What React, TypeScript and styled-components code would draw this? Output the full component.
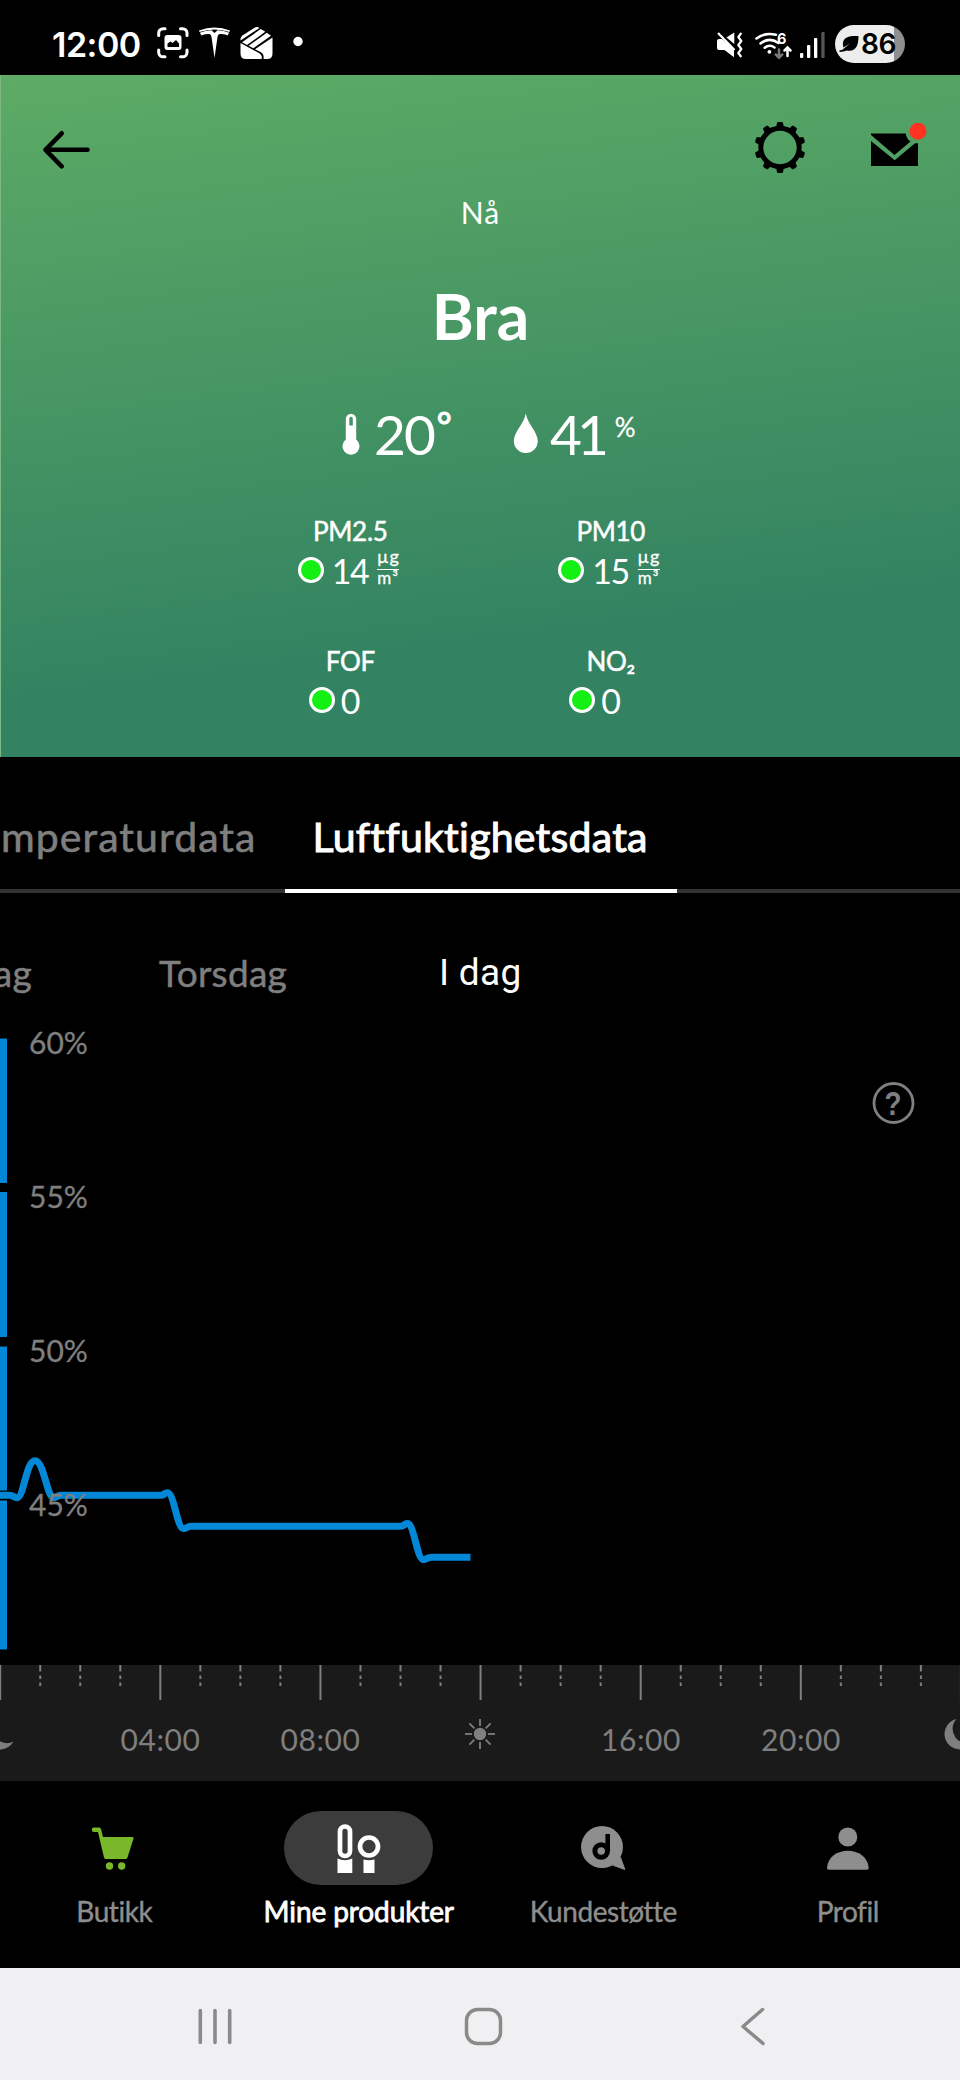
import React from "react";
import styled, { createGlobalStyle } from "styled-components";

const lato = `Lato, "Open Sans", sans-serif`;
const GREY = "#7f7f7f";
const BLUE = "#0288d6";

const GlobalStyle = createGlobalStyle`
  body { margin: 0; background: #000; }
  * { box-sizing: border-box; }
  svg { display: block; flex: none; }
`;

const Screen = styled.div`
  width: 960px;
  height: 2080px;
  display: flex;
  flex-direction: column;
  overflow: hidden;
  background: #000;
  font-family: ${lato};
  font-variant-ligatures: none;
  color: #fff;
`;

/* ---------- status bar ---------- */

const StatusBar = styled.div`
  height: 75px;
  flex: none;
  display: flex;
  align-items: flex-start;
  padding: 25px 55px 0 52px;
`;

const Clock = styled.span`
  width: 103px;
  font: 600 34px/40px Inter, sans-serif;
  letter-spacing: -0.5px;
`;

const StatusRight = styled.div`
  margin-left: auto;
  display: flex;
  gap: 5px;
`;

const Battery = styled.div`
  width: 70px;
  height: 38px;
  display: flex;
  align-items: center;
  justify-content: flex-end;
  gap: 2px;
  padding-right: 9px;
  border-radius: 19px;
  background: linear-gradient(90deg, #ededed 59px, #8f8f8f 59px);
  color: #000;
  font: 600 28px/38px Inter, sans-serif;
  letter-spacing: -0.4px;
`;

/* ---------- hero ---------- */

const Hero = styled.header`
  height: 682px;
  flex: none;
  display: flex;
  flex-direction: column;
  border-left: 1px solid #7bb883;
  background: linear-gradient(173deg, #5dab65 0%, #338362 78%);
`;

const TopBar = styled.div`
  height: 119px;
  flex: none;
  display: flex;
  align-items: flex-start;
  padding: 45px 29px 0 40px;
`;

const TopActions = styled.div`
  display: flex;
  gap: 61px;
  margin-left: auto;
`;

const NowLabel = styled.div`
  text-align: center;
  font-size: 30px;
  line-height: 36px;
  letter-spacing: 1px;
`;

const Quality = styled.h1`
  margin: 46px 0 0;
  text-align: center;
  font-size: 64px;
  font-weight: 700;
  line-height: 80px;
`;

const Climate = styled.div`
  height: 66px;
  margin-top: 45px;
  padding-left: 339px;
  display: flex;
  font-size: 55px;
  line-height: 66px;

  svg {
    margin-top: 10px;
  }
`;

const Reading = styled.div<{ $width: number }>`
  width: ${(p) => p.$width}px;
  display: flex;
`;

const Figure = styled.span<{ $tight: number; $left: number }>`
  margin-left: ${(p) => p.$left}px;
  letter-spacing: ${(p) => -p.$tight}px;
`;

const Superscript = styled.sup<{ $size: number; $left: number; $line: number; $stroke: number }>`
  margin-left: ${(p) => p.$left}px;
  font-size: ${(p) => p.$size}px;
  line-height: ${(p) => p.$line}px;
  -webkit-text-stroke: ${(p) => p.$stroke}px #fff;
`;

const MetricGrid = styled.div`
  width: 521px;
  margin: 48px auto 0;
  display: grid;
  grid-template-columns: 1fr 1fr;
  grid-auto-rows: 130px;
`;

const Metric = styled.div`
  display: flex;
  flex-direction: column;
  align-items: center;
  gap: 3px;
`;

const MetricName = styled.div`
  font-size: 26px;
  line-height: 32px;
  letter-spacing: -0.3px;
  -webkit-text-stroke: 0.5px #fff;
`;

const MetricValue = styled.div<{ $width: number }>`
  width: ${(p) => p.$width}px;
  height: 42px;
  display: flex;
  align-items: flex-start;
`;

const Lamp = styled.span`
  width: 26px;
  height: 26px;
  margin-top: 7px;
  border: 3.5px solid #fff;
  border-radius: 50%;
  background: #14f014;
`;

const Amount = styled.span<{ $wide?: boolean }>`
  margin-left: ${(p) => (p.$wide ? 8 : 6)}px;
  font-size: 34px;
  line-height: 42px;
  letter-spacing: ${(p) => (p.$wide ? -1.5 : 0)}px;
`;

const Unit = styled.span`
  display: flex;
  flex-direction: column;
  width: 22px;
  margin-left: 9px;
  -webkit-text-stroke: 0.3px #fff;

  span:first-child {
    height: 20px;
    font-size: 18px;
    line-height: 13px;
    letter-spacing: 1.6px;
    border-bottom: 1px solid #fff;
  }
  span:last-child {
    font-size: 17px;
    line-height: 16px;
    letter-spacing: 1px;
  }
`;

/* ---------- tabs and days ---------- */

const Tabs = styled.nav`
  height: 136px;
  flex: none;
  display: flex;
  overflow: hidden;
`;

const Tab = styled.div<{ $active?: boolean; $width?: number }>`
  ${(p) => (p.$width ? `width: ${p.$width}px; flex: none;` : "flex: 1;")}
  display: flex;
  justify-content: ${(p) => (p.$active ? "flex-start" : "flex-end")};
  padding: 55px 28px 0 28px;
  border-bottom: 4px solid ${(p) => (p.$active ? "#fff" : "#333")};
  color: ${(p) => (p.$active ? "#fff" : GREY)};
  -webkit-text-stroke: ${(p) => (p.$active ? "1px #fff" : "0.6px #7f7f7f")};
  font-size: 41px;
  line-height: 50px;
  letter-spacing: ${(p) => (p.$active ? 0.25 : 1.05)}px;
  white-space: nowrap;
`;

const Days = styled.div`
  height: 102px;
  flex: none;
  display: grid;
  grid-template-columns: 32px 280px auto;
  padding-top: 58px;
  overflow: hidden;
`;

const Day = styled.div<{ $active?: boolean; $cut?: boolean }>`
  display: flex;
  justify-content: ${(p) => (p.$cut ? "flex-end" : "flex-start")};
  padding-left: ${(p) => (p.$cut ? 0 : 127)}px;
  color: ${(p) => (p.$active ? "#fff" : GREY)};
  font-family: ${(p) => (p.$active ? "Roboto, sans-serif" : lato)};
  -webkit-text-stroke: ${(p) => (p.$active ? "0" : "0.5px #7f7f7f")};
  font-size: 37px;
  line-height: 44px;
  letter-spacing: 0.3px;
  white-space: nowrap;
`;

/* ---------- bottom navigation ---------- */

const BottomNav = styled.nav`
  height: 187px;
  flex: none;
  display: grid;
  grid-template-columns: repeat(4, 244.5px);
  margin-left: -8px;
  padding-top: 30px;
`;

const NavItem = styled.div<{ $active?: boolean }>`
  display: flex;
  flex-direction: column;
  align-items: center;
  gap: 9px;
  color: ${(p) => (p.$active ? "#fff" : "#8e8e8e")};
  -webkit-text-stroke: ${(p) => (p.$active ? "0.8px" : "0.4px")} currentColor;
  font-size: 28px;
  line-height: 34px;
  letter-spacing: ${(p) => (p.$active ? -0.1 : -0.45)}px;
`;

const NavPill = styled.div<{ $active?: boolean }>`
  width: 149px;
  height: 74px;
  display: flex;
  align-items: center;
  justify-content: center;
  border-radius: 37px;
  background: ${(p) => (p.$active ? "#3c3c3c" : "transparent")};
`;

const SystemNav = styled.div`
  height: 112px;
  flex: none;
  display: flex;
  gap: 229px;
  padding: 39px 0 0 195px;
  background: #f0f0f2;
`;

/* ---------- drawings ---------- */

const NotificationIcons = () => (
  <svg width="150" height="36" viewBox="155 28 150 36" fill="#fff">
    <g fill="none" stroke="#fff" strokeWidth="3" strokeLinecap="round">
      <path d="M158.7 38.5V36a4.5 4.5 0 0 1 4.5-4.3H165M180.5 31.7H182.5a4.5 4.5 0 0 1 4.5 4.3V38.5M187 53V55.5a4.5 4.5 0 0 1-4.5 4.3H180.5M165 59.8H163.2a4.5 4.5 0 0 1-4.5-4.3V53" />
    </g>
    <rect x="164.5" y="38" width="17" height="15" rx="3" />
    <path d="M167.500 50v-3.500l3-2 2 1.500 3.500-3 3 3.500V50z" fill="#000" />
    <path d="M199 33.500Q214.500 27.500 230 33.500L229.500 35Q214.500 30 199.500 35z" />
    <path d="M199.800 35.700Q206 33 211.500 33.200L214.500 36L217.500 33.200Q223 33 229.200 35.700L227.500 38.500Q225 36.500 219.500 37Q217.800 37.500 217.500 40L214.500 61L211.500 40Q211.200 37.500 209.500 37Q204 36.500 201.500 38.500z" />
    <path d="M240.500 46L258 55.500Q263 58 261.500 62H246Q240.500 62 240.500 56.500z" />
    <path d="M240.500 43.500V42Q240.500 40 242.500 38.500L254.500 30.800Q257 29.300 259.500 31z" />
    <path d="M242 45.300L260.800 32L265.300 34.800L247 47.900z" />
    <path d="M248.600 48.800L266.800 35.800L271 38.800L253.400 51.300z" />
    <path d="M255 52.200L272.500 40.500V56.500Q272.500 62 267 62H263.500Q264.500 57 260.500 55z" />
    <circle cx="298" cy="44.500" r="4.700" />
  </svg>
);

const SignalIcons = () => (
  <svg width="115" height="40" viewBox="714 25 115 40" fill="#fff">
    <path d="M716 41q0-2 2-2h3l12 10v8.200l-9.500-7.200H718q-2 0-2-2zM733.300 32.500V44L725.500 37.500z" />
    <path d="M717 33L733.500 50" stroke="#fff" strokeWidth="2.300" />
    <path d="M740.300 33l-3 4 3 4-3 4 3 4-3 4 3 4" fill="none" stroke="#fff" strokeWidth="2.200" strokeLinejoin="round" />
    <g fill="none" stroke="#fff" strokeWidth="2.500" strokeLinecap="round">
      <path d="M755.500 38.500Q764 32 775 34.800M759.500 43.500Q768 36.500 777.500 43M763.700 47.700Q768.500 44 773.500 47.500" />
      <path d="M786.500 56V48M783.500 50.500L786.500 47.500L789.500 50.500" />
      <path d="M778 49.500V57.500M774.800 54.500L778 57.700L781.200 54.500" stroke="#777" />
    </g>
    <circle cx="768.400" cy="51.800" r="1.900" />
    <text x="776" y="44" fontSize="14.500" fontWeight="700" fontFamily="Inter, sans-serif">6</text>
    <rect x="799" y="53" width="3.300" height="5" rx="1" />
    <rect x="806" y="45" width="3.300" height="13" rx="1" />
    <rect x="813" y="38" width="3.300" height="20" rx="1" />
    <rect x="820.300" y="32" width="3.300" height="26" rx="1" fill="#555" />
  </svg>
);

const LeafIcon = () => (
  <svg width="20" height="18" viewBox="838 35 20 18">
    <path d="M857.500 36c-8-.5-14.500.5-15.500 6.500q-.5 3 .5 5L849 43.500L841 50l-2.500.2v1.800l4-.4q2-.6 3.500-1.200c8 1.500 11.500-3.400 11.500-14.400z" />
  </svg>
);

const BackArrow = () => (
  <svg width="52" height="60" viewBox="41 120 52 60" fill="none" stroke="#000" strokeWidth="4.600" strokeLinecap="round" strokeLinejoin="round">
    <path d="M87.500 149.800H45.500M61.700 133.300L45.500 149.800L61.700 166.300" />
  </svg>
);

const GearIcon = () => (
  <svg width="52" height="56" viewBox="754 120 52 56">
    <circle cx="780" cy="147.500" r="19.200" fill="none" stroke="#000" strokeWidth="5" />
    {Array.from({ length: 10 }, (_, i) => (
      <path key={i} d="M775.800 128.500L777.200 122.300Q780 121.500 782.800 122.300L784.200 128.500z" transform={`rotate(${i * 36} 780 147.500)`} />
    ))}
  </svg>
);

const MailIcon = () => (
  <svg width="64" height="56" viewBox="867 120 64 56">
    <path d="M871 133.500H905.500Q907 139.500 910.500 141.500L894.500 155L871 135z" />
    <path d="M871 141L894.700 160.300L915 143.200H918V166H871z" />
    <circle cx="918" cy="131.200" r="8.500" fill="#ff3320" />
  </svg>
);

const Thermometer = () => (
  <svg width="21" height="46" viewBox="339 411 21 46">
    <path fill="#fff" fillRule="evenodd" d="M344.800 419a5.200 5.200 0 0 1 10.400 0V439.500a8.500 8.500 0 1 1-10.400 0zM348.300 418.500V425.500h3.500V418.500a1.750 1.750 0 0 0-3.500 0z" />
  </svg>
);

const Droplet = () => (
  <svg width="26" height="46" viewBox="513 411 26 46">
    <path fill="#fff" d="M525.800 413.500C527.500 424 537.800 432 537.800 441a12 12 0 0 1-24 0C513.800 432 524 424 525.800 413.500z" />
  </svg>
);

const CartIcon = () => (
  <svg width="46" height="46" viewBox="90 1825 46 46" fill="#78b82a">
    <path d="M93 1827.500H98q1.500 0 2 1.500L102 1837H131.500q1.500 0 1 1.500L126.500 1857.500q-.5 1.500-2 1.500H105q-1.500 0-2-1.500L97 1832H93a2.200 2.200 0 0 1 0-4.500z" />
    <circle cx="108.500" cy="1866" r="3.700" />
    <circle cx="120.700" cy="1866" r="3.700" />
  </svg>
);

const ProductsIcon = () => (
  <svg width="46" height="52" viewBox="336.500 1822 46 52" fill="#fff">
    <rect x="340.500" y="1826.500" width="10" height="29.500" rx="5" fill="none" stroke="#fff" strokeWidth="4.700" />
    <path d="M338 1858.500q7.500 3.500 14.800 0V1873H338z" />
    <circle cx="369.500" cy="1846.500" r="9" fill="none" stroke="#fff" strokeWidth="4.700" />
    <path d="M364 1859.500q5.500 1.500 11 0V1873H364z" />
  </svg>
);

const SupportIcon = () => (
  <svg width="46" height="46" viewBox="578.500 1825 46 46">
    <circle cx="600.500" cy="1847" r="21" fill="#8e8e8e" />
    <path d="M619 1857.500L623.300 1869.500L611 1865z" fill="#8e8e8e" stroke="#8e8e8e" strokeLinejoin="round" />
    <circle cx="599.700" cy="1851" r="6.300" fill="none" stroke="#000" strokeWidth="5" />
    <path d="M606.200 1834V1852" stroke="#000" strokeWidth="4.600" />
  </svg>
);

const ProfileIcon = () => (
  <svg width="46" height="46" viewBox="824 1825 46 46" fill="#8e8e8e">
    <circle cx="846.800" cy="1837" r="9.500" />
    <path d="M826 1867.500C827 1857 836 1850.800 846.800 1850.800S866.600 1857 867.700 1867.500q.2 2.200-2 2.200H828q-2.200 0-2-2.200z" />
  </svg>
);

/* ---------- chart ---------- */

const moon = (cx: number) =>
  `M${cx - 3.5} 1718.9A15.500 15.500 0 1 0 ${cx + 13.5} 1741.600A14.400 14.400 0 0 1 ${cx - 3.5} 1718.900z`;

const scale = [
  { label: "60%", y: 1053.5 },
  { label: "55%", y: 1207.5 },
  { label: "50%", y: 1361.5 },
  { label: "45%", y: 1516 },
];

const bars = [
  [1038.5, 1183],
  [1192, 1337],
  [1346.5, 1490.5],
  [1500.5, 1649.5],
];

const hours = [
  { label: "04:00", x: 160.5 },
  { label: "08:00", x: 320.5 },
  { label: "16:00", x: 641 },
  { label: "20:00", x: 801 },
];

const HumidityChart = () => (
  <svg width="960" height="786" viewBox="0 995 960 786" fontFamily={lato} fontSize="30" fill={GREY}>
    {bars.map(([from, to]) => (
      <rect key={from} x="0" y={from} width="7" height={to - from} fill={BLUE} />
    ))}
    <path
      d="M0 1495.300H10C13 1495.300 14 1497.700 17 1497.700C24 1497.700 26 1460.700 35 1460.700C44 1460.700 47 1497.700 53.500 1497.700C57 1497.700 57 1495.300 61 1495.300H161C164 1495.300 164 1492.800 167.500 1492.800C174 1492.800 177 1528.500 183.500 1528.500C187 1528.500 187 1526.300 191 1526.300H401C404 1526.300 404 1523.600 407.500 1523.600C414 1523.600 417 1559.700 423.500 1559.700C427 1559.700 427 1557.200 432 1557.200H470.500"
      fill="none"
      stroke={BLUE}
      strokeWidth="7"
    />
    {scale.map((s) => (
      <text key={s.label} x="29" y={s.y} stroke={GREY} strokeWidth="0.300">{s.label}</text>
    ))}

    <circle cx="893.500" cy="1103" r="19.500" fill="none" stroke={GREY} strokeWidth="2.800" />
    <text x="893" y="1114.500" textAnchor="middle" fontSize="33" fontWeight="700" fontFamily="Liberation Sans, sans-serif" textLength="17" lengthAdjust="spacingAndGlyphs">?</text>

    <rect x="0" y="1665" width="960" height="116" fill="#1a1a1a" />
    {Array.from({ length: 25 }, (_, i) => (
      <path
        key={i}
        d={`M${i * 40.03 + 0.2} 1665V${i % 4 ? 1686 : 1700}`}
        stroke={GREY}
        strokeWidth="2"
        strokeDasharray={i % 4 ? "6.500 4 3.500 3.500" : undefined}
      />
    ))}
    {hours.map((h) => (
      <text key={h.label} x={h.x} y="1750.500" textAnchor="middle" letterSpacing="0.600">{h.label}</text>
    ))}
    <circle cx="480" cy="1734" r="6.200" />
    {Array.from({ length: 8 }, (_, i) => (
      <path key={i} d="M480 1719V1726" stroke={GREY} strokeWidth="1.800" transform={`rotate(${i * 45} 480 1734)`} />
    ))}
    <path d={moon(0)} />
    <path d={moon(960)} />
  </svg>
);

/* ---------- page ---------- */

const metrics = [
  { name: "PM2.5", value: "14", unit: true },
  { name: "PM10", value: "15", unit: true },
  { name: "FOF", value: "0", unit: false },
  { name: "NO₂", value: "0", unit: false },
];

const navItems = [
  { label: "Butikk", icon: <CartIcon /> },
  { label: "Mine produkter", icon: <ProductsIcon />, active: true },
  { label: "Kundestøtte", icon: <SupportIcon /> },
  { label: "Profil", icon: <ProfileIcon /> },
];

export default function App() {
  return (
    <Screen>
      <GlobalStyle />
      <StatusBar>
        <Clock>12:00</Clock>
        <NotificationIcons />
        <StatusRight>
          <SignalIcons />
          <Battery>
            <LeafIcon />
            86
          </Battery>
        </StatusRight>
      </StatusBar>

      <Hero>
        <TopBar>
          <BackArrow />
          <TopActions>
            <GearIcon />
            <MailIcon />
          </TopActions>
        </TopBar>
        <NowLabel>Nå</NowLabel>
        <Quality>Bra</Quality>
        <Climate>
          <Reading $width={173}>
            <Thermometer />
            <Figure $left={13} $tight={2}>20</Figure>
            <Superscript $size={36} $left={3} $line={48} $stroke={1.2}>°</Superscript>
          </Reading>
          <Reading $width={130}>
            <Droplet />
            <Figure $left={11} $tight={5}>41</Figure>
            <Superscript $size={26} $left={11} $line={53} $stroke={0.3}>%</Superscript>
          </Reading>
        </Climate>
        <MetricGrid>
          {metrics.map((m) => (
            <Metric key={m.name}>
              <MetricName>{m.name}</MetricName>
              <MetricValue $width={m.unit ? 105 : 83}>
                <Lamp />
                <Amount $wide={m.unit}>{m.value}</Amount>
                {m.unit && (
                  <Unit>
                    <span>μg</span>
                    <span>m³</span>
                  </Unit>
                )}
              </MetricValue>
            </Metric>
          ))}
        </MetricGrid>
      </Hero>

      <Tabs>
        <Tab $width={284.5}>Temperaturdata</Tab>
        <Tab $active $width={392.5}>Luftfuktighetsdata</Tab>
        <Tab />
      </Tabs>

      <Days>
        <Day $cut>Onsdag</Day>
        <Day>Torsdag</Day>
        <Day $active>I dag</Day>
      </Days>

      <HumidityChart />

      <BottomNav>
        {navItems.map((n) => (
          <NavItem key={n.label} $active={n.active}>
            <NavPill $active={n.active}>{n.icon}</NavPill>
            {n.label}
          </NavItem>
        ))}
      </BottomNav>

      <SystemNav>
        <svg width="40" height="40" viewBox="195 2007 40 40" stroke="#8a8a8a" strokeWidth="3.600" strokeLinecap="round">
          <path d="M200.300 2010.500V2042.500M215 2010.500V2042.500M229.700 2010.500V2042.500" />
        </svg>
        <svg width="40" height="40" viewBox="464 2007 40 40" fill="none" stroke="#8a8a8a" strokeWidth="3.500">
          <rect x="466.500" y="2009.500" width="34" height="34" rx="11" />
        </svg>
        <svg width="40" height="40" viewBox="733 2007 40 40" fill="none" stroke="#8a8a8a" strokeWidth="3.500" strokeLinecap="round" strokeLinejoin="round">
          <path d="M762.500 2009.500L743 2026.500L763 2043.500" />
        </svg>
      </SystemNav>
    </Screen>
  );
}
